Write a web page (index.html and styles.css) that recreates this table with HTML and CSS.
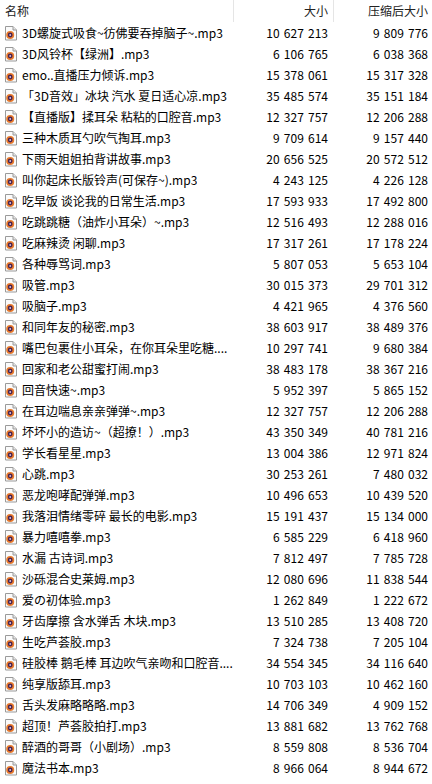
FILE: index.html
```html
<!DOCTYPE html>
<html lang="zh">
<head>
<meta charset="utf-8">
<title>文件列表</title>
<link rel="stylesheet" href="styles.css">
</head>
<body>
<svg class="defs" width="0" height="0" aria-hidden="true">
  <symbol id="ico" viewBox="0 0 16 16">
    <path d="M1.5 1.5h7.5l3.5 3.5v10h-11z" fill="#fbfbfb" stroke="#9a9a9a"/>
    <path d="M9 1.5v3.5h3.5" fill="#e6e6e6" stroke="#9a9a9a"/>
    <circle cx="6.2" cy="10" r="4" fill="#e87a2c"/>
    <circle cx="6.2" cy="10" r="2.4" fill="#4b2350"/>
    <circle cx="6.2" cy="10" r="0.9" fill="#d9c6de"/>
  </symbol>
</svg>
<div class="list">
  <div class="head">
    <div class="hname">名称</div>
    <div class="hnum sep">大小</div>
    <div class="hnum sep">压缩后大小</div>
  </div>
  <div class="row"><div class="name"><svg class="ic"><use href="#ico"/></svg><span>3D螺旋式吸食~彷佛要吞掉脑子~.mp3</span></div><div class="num">10 627 213</div><div class="num c">9 809 776</div></div>
  <div class="row"><div class="name"><svg class="ic"><use href="#ico"/></svg><span>3D风铃杯【绿洲】.mp3</span></div><div class="num">6 106 765</div><div class="num c">6 038 368</div></div>
  <div class="row"><div class="name"><svg class="ic"><use href="#ico"/></svg><span>emo..直播压力倾诉.mp3</span></div><div class="num">15 378 061</div><div class="num c">15 317 328</div></div>
  <div class="row"><div class="name"><svg class="ic"><use href="#ico"/></svg><span>「3D音效」冰块 汽水 夏日适心凉.mp3</span></div><div class="num">35 485 574</div><div class="num c">35 151 184</div></div>
  <div class="row"><div class="name"><svg class="ic"><use href="#ico"/></svg><span>【直播版】揉耳朵 粘粘的口腔音.mp3</span></div><div class="num">12 327 757</div><div class="num c">12 206 288</div></div>
  <div class="row"><div class="name"><svg class="ic"><use href="#ico"/></svg><span>三种木质耳勺吹气掏耳.mp3</span></div><div class="num">9 709 614</div><div class="num c">9 157 440</div></div>
  <div class="row"><div class="name"><svg class="ic"><use href="#ico"/></svg><span>下雨天姐姐拍背讲故事.mp3</span></div><div class="num">20 656 525</div><div class="num c">20 572 512</div></div>
  <div class="row"><div class="name"><svg class="ic"><use href="#ico"/></svg><span>叫你起床长版铃声(可保存~).mp3</span></div><div class="num">4 243 125</div><div class="num c">4 226 128</div></div>
  <div class="row"><div class="name"><svg class="ic"><use href="#ico"/></svg><span>吃早饭 谈论我的日常生活.mp3</span></div><div class="num">17 593 933</div><div class="num c">17 492 800</div></div>
  <div class="row"><div class="name"><svg class="ic"><use href="#ico"/></svg><span>吃跳跳糖（油炸小耳朵）~.mp3</span></div><div class="num">12 516 493</div><div class="num c">12 288 016</div></div>
  <div class="row"><div class="name"><svg class="ic"><use href="#ico"/></svg><span>吃麻辣烫 闲聊.mp3</span></div><div class="num">17 317 261</div><div class="num c">17 178 224</div></div>
  <div class="row"><div class="name"><svg class="ic"><use href="#ico"/></svg><span>各种辱骂词.mp3</span></div><div class="num">5 807 053</div><div class="num c">5 653 104</div></div>
  <div class="row"><div class="name"><svg class="ic"><use href="#ico"/></svg><span>吸管.mp3</span></div><div class="num">30 015 373</div><div class="num c">29 701 312</div></div>
  <div class="row"><div class="name"><svg class="ic"><use href="#ico"/></svg><span>吸脑子.mp3</span></div><div class="num">4 421 965</div><div class="num c">4 376 560</div></div>
  <div class="row"><div class="name"><svg class="ic"><use href="#ico"/></svg><span>和同年友的秘密.mp3</span></div><div class="num">38 603 917</div><div class="num c">38 489 376</div></div>
  <div class="row"><div class="name"><svg class="ic"><use href="#ico"/></svg><span>嘴巴包裹住小耳朵，在你耳朵里吃糖....</span></div><div class="num">10 297 741</div><div class="num c">9 680 384</div></div>
  <div class="row"><div class="name"><svg class="ic"><use href="#ico"/></svg><span>回家和老公甜蜜打闹.mp3</span></div><div class="num">38 483 178</div><div class="num c">38 367 216</div></div>
  <div class="row"><div class="name"><svg class="ic"><use href="#ico"/></svg><span>回音快速~.mp3</span></div><div class="num">5 952 397</div><div class="num c">5 865 152</div></div>
  <div class="row"><div class="name"><svg class="ic"><use href="#ico"/></svg><span>在耳边喘息亲亲弹弹~.mp3</span></div><div class="num">12 327 757</div><div class="num c">12 206 288</div></div>
  <div class="row"><div class="name"><svg class="ic"><use href="#ico"/></svg><span>坏坏小的造访~（超撩！）.mp3</span></div><div class="num">43 350 349</div><div class="num c">40 781 216</div></div>
  <div class="row"><div class="name"><svg class="ic"><use href="#ico"/></svg><span>学长看星星.mp3</span></div><div class="num">13 004 386</div><div class="num c">12 971 824</div></div>
  <div class="row"><div class="name"><svg class="ic"><use href="#ico"/></svg><span>心跳.mp3</span></div><div class="num">30 253 261</div><div class="num c">7 480 032</div></div>
  <div class="row"><div class="name"><svg class="ic"><use href="#ico"/></svg><span>恶龙咆哮配弹弹.mp3</span></div><div class="num">10 496 653</div><div class="num c">10 439 520</div></div>
  <div class="row"><div class="name"><svg class="ic"><use href="#ico"/></svg><span>我落泪情绪零碎 最长的电影.mp3</span></div><div class="num">15 191 437</div><div class="num c">15 134 000</div></div>
  <div class="row"><div class="name"><svg class="ic"><use href="#ico"/></svg><span>暴力嘻嘻拳.mp3</span></div><div class="num">6 585 229</div><div class="num c">6 418 960</div></div>
  <div class="row"><div class="name"><svg class="ic"><use href="#ico"/></svg><span>水漏 古诗词.mp3</span></div><div class="num">7 812 497</div><div class="num c">7 785 728</div></div>
  <div class="row"><div class="name"><svg class="ic"><use href="#ico"/></svg><span>沙砾混合史莱姆.mp3</span></div><div class="num">12 080 696</div><div class="num c">11 838 544</div></div>
  <div class="row"><div class="name"><svg class="ic"><use href="#ico"/></svg><span>爱の初体验.mp3</span></div><div class="num">1 262 849</div><div class="num c">1 222 672</div></div>
  <div class="row"><div class="name"><svg class="ic"><use href="#ico"/></svg><span>牙齿摩擦 含水弹舌 木块.mp3</span></div><div class="num">13 510 285</div><div class="num c">13 408 720</div></div>
  <div class="row"><div class="name"><svg class="ic"><use href="#ico"/></svg><span>生吃芦荟胶.mp3</span></div><div class="num">7 324 738</div><div class="num c">7 205 104</div></div>
  <div class="row"><div class="name"><svg class="ic"><use href="#ico"/></svg><span>硅胶棒 鹅毛棒 耳边吹气亲吻和口腔音....</span></div><div class="num">34 554 345</div><div class="num c">34 116 640</div></div>
  <div class="row"><div class="name"><svg class="ic"><use href="#ico"/></svg><span>纯享版舔耳.mp3</span></div><div class="num">10 703 103</div><div class="num c">10 462 160</div></div>
  <div class="row"><div class="name"><svg class="ic"><use href="#ico"/></svg><span>舌头发麻略略略.mp3</span></div><div class="num">14 706 349</div><div class="num c">4 909 152</div></div>
  <div class="row"><div class="name"><svg class="ic"><use href="#ico"/></svg><span>超顶！芦荟胶拍打.mp3</span></div><div class="num">13 881 682</div><div class="num c">13 762 768</div></div>
  <div class="row"><div class="name"><svg class="ic"><use href="#ico"/></svg><span>醉酒的哥哥（小剧场）.mp3</span></div><div class="num">8 559 808</div><div class="num c">8 536 704</div></div>
  <div class="row"><div class="name"><svg class="ic"><use href="#ico"/></svg><span>魔法书本.mp3</span></div><div class="num">8 966 064</div><div class="num c">8 944 672</div></div>
</div>
</body>
</html>
```
FILE: styles.css
```css
html, body {
  margin: 0;
  padding: 0;
  background: #ffffff;
}
body {
  font-family: "Noto Sans CJK SC", "Noto Sans", sans-serif;
  font-size: 12px;
  color: #000000;
}
.defs {
  position: absolute;
  width: 0;
  height: 0;
  overflow: hidden;
}
.list {
  width: 432px;
}
.head {
  display: grid;
  grid-template-columns: 233px 100px 99px;
  height: 22px;
  align-items: stretch;
  color: #222222;
}
.hname {
  padding-left: 5px;
  line-height: 21px;
}
.hnum {
  text-align: right;
  line-height: 21px;
  padding-right: 5px;
}
.sep {
  border-left: 1px solid #e5e5e5;
}
.head .hnum:last-child {
  padding-right: 4px;
}
.row {
  display: grid;
  grid-template-columns: 233px 100px 99px;
  height: 21px;
  align-items: center;
}
.name {
  display: flex;
  align-items: center;
  gap: 2px;
  padding-left: 4px;
  overflow: hidden;
  white-space: nowrap;
}
.name span {
  overflow: hidden;
}
.ic {
  width: 16px;
  height: 16px;
  flex: none;
}
.num {
  text-align: right;
  padding-right: 5px;
  white-space: nowrap;
  word-spacing: 1.5px;
}
.num.c {
  padding-right: 4px;
}
```
